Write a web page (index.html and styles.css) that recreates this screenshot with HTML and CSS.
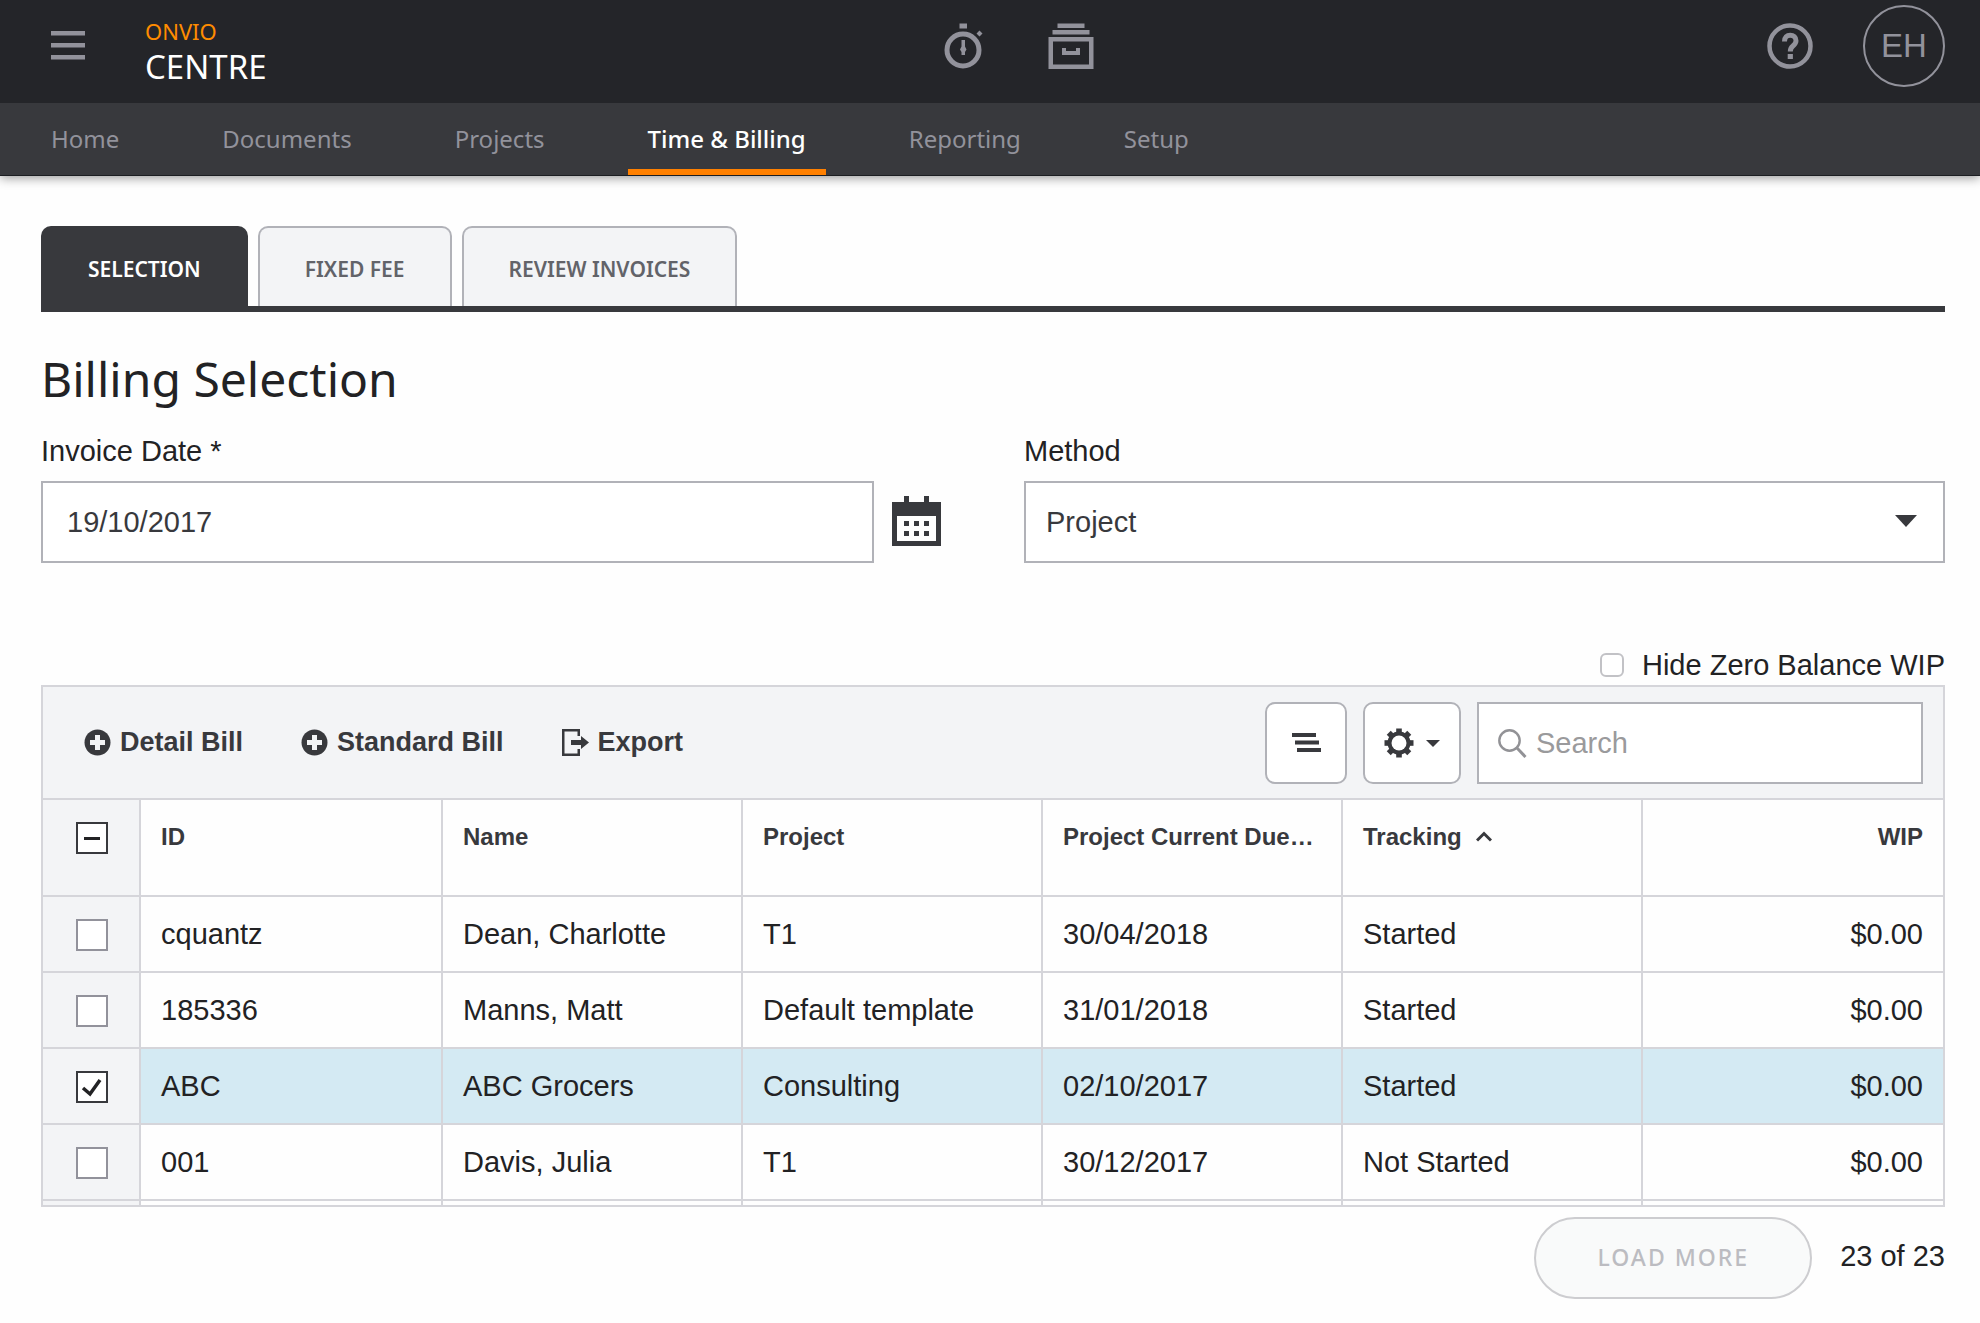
FILE: index.html
```html
<!DOCTYPE html>
<html lang="en-GB">
<head>
<meta charset="utf-8">
<meta name="viewport" content="width=device-width, initial-scale=1">
<title>Billing Selection - Onvio Centre</title>
<link rel="stylesheet" href="styles.css">
</head>
<body>
<header class="site-header">
  <div class="topbar">
    <div class="topbar-left">
      <button class="icon-btn" type="button" aria-label="Menu">
        <svg width="34" height="30" viewBox="0 0 34 30" fill="currentColor"><path d="M0 0h34v4.500H0zM0 12h34v4.500H0zM0 24h34v4.500H0z"/></svg>
      </button>
      <a class="brand" href="#"><span class="brand-top">ONVIO</span><span class="brand-name">CENTRE</span></a>
    </div>
    <div class="topbar-center">
      <button class="icon-btn" type="button" aria-label="Timer">
        <svg width="40" height="46" viewBox="0 0 40 46" fill="none">
          <circle cx="19" cy="27" r="16" stroke="currentColor" stroke-width="5"/>
          <path fill="currentColor" d="M15.500 0.500h7.500v5h-7.500zM35.500 7.500l3 3-3 3-3-3zM17.500 17h3.500v6.500l1.500 3-1.500 2.500v3h-3.500v-3l-1.500-2.500 1.500-3z"/>
        </svg>
      </button>
      <button class="icon-btn" type="button" aria-label="Files">
        <svg width="46" height="46" viewBox="0 0 46 46" fill="none">
          <path fill="currentColor" d="M9.500 0.500h27v4.500h-27zM4.500 7h37v4.500h-37zM14 25h4v3h10v-3h4v7H14z"/>
          <path stroke="currentColor" stroke-width="4.500" d="M2.750 16.250h40.500v27.500H2.750z"/>
        </svg>
      </button>
    </div>
    <div class="topbar-right">
      <button class="icon-btn" type="button" aria-label="Help">
        <svg width="46" height="46" viewBox="0 0 46 46" fill="none" stroke="currentColor">
          <circle cx="23" cy="23" r="20.500" stroke-width="4.500"/>
          <path stroke-width="5" d="M17.500 18.500c0-4.200 2.400-6.200 5.700-6.200s5.800 2 5.800 5.400c0 2.700-1.500 3.900-3 5.200-1.800 1.500-2.700 2.500-2.700 5.600"/>
          <path fill="currentColor" stroke="none" d="M20.700 31h5.200v5h-5.200z"/>
        </svg>
      </button>
      <button class="avatar" type="button">EH</button>
    </div>
  </div>
  <nav class="main-nav">
    <a href="#">Home</a>
    <a href="#">Documents</a>
    <a href="#">Projects</a>
    <a class="active" href="#" aria-current="page">Time &amp; Billing</a>
    <a href="#">Reporting</a>
    <a href="#">Setup</a>
  </nav>
</header>

<main class="content">
  <div class="tabs">
    <button class="tab tab-active" type="button">SELECTION</button>
    <button class="tab" type="button">FIXED FEE</button>
    <button class="tab" type="button">REVIEW INVOICES</button>
  </div>

  <h1>Billing Selection</h1>

  <div class="form-grid">
    <div class="field">
      <label for="invoice-date">Invoice Date *</label>
      <div class="date-row">
        <input class="control date-input" id="invoice-date" type="text" value="19/10/2017">
        <button class="icon-btn calendar-btn" type="button" aria-label="Choose a date">
          <svg width="50" height="50" viewBox="0 0 50 50" fill="currentColor">
            <path fill-rule="evenodd" d="M0 6h12V0h5v6h15V0h5v6h12v44H0zM5 20v25h39V20z"/>
            <path d="M12 25h5v5h-5zM22 25h5v5h-5zM32 25h5v5h-5zM12 35h5v5h-5zM22 35h5v5h-5zM32 35h5v5h-5z"/>
          </svg>
        </button>
      </div>
    </div>
    <div class="field">
      <label for="method">Method</label>
      <div class="select-wrap">
        <select class="control" id="method"><option>Project</option></select>
        <svg class="select-arrow" width="22" height="12" viewBox="0 0 22 12" fill="currentColor"><path d="M0 0h22L11 12z"/></svg>
      </div>
    </div>
  </div>

  <div class="zero-row">
    <label class="zero-label"><input class="zero-check" type="checkbox">Hide Zero Balance WIP</label>
  </div>

  <section class="grid-panel">
    <div class="toolbar">
      <div class="toolbar-actions">
        <button class="action" type="button">
          <svg width="27" height="27" viewBox="0 0 27 27"><circle cx="13.500" cy="13.500" r="13" fill="currentColor"/><path fill="#f3f4f6" d="M11 6h5v5h5v5h-5v5h-5v-5H6v-5h5z"/></svg>Detail Bill</button>
        <button class="action" type="button">
          <svg width="27" height="27" viewBox="0 0 27 27"><circle cx="13.500" cy="13.500" r="13" fill="currentColor"/><path fill="#f3f4f6" d="M11 6h5v5h5v5h-5v5h-5v-5H6v-5h5z"/></svg>Standard Bill</button>
        <button class="action" type="button">
          <svg width="27" height="27" viewBox="0 0 27 27" fill="currentColor"><path d="M0 0h18v7h-2.500V2.500h-13v22h13V20H18v7H0z"/><path d="M9 11h10V7l8 6.500-8 6.500v-4H9z"/></svg>Export</button>
      </div>
      <div class="toolbar-tools">
        <button class="tool-btn list-btn" type="button" aria-label="Group rows">
          <svg width="30" height="20" viewBox="0 0 30 20" fill="currentColor"><path d="M1 0h24v4H1zM4 7.500h24v4H4zM6 15h24v4H6z"/></svg>
        </button>
        <button class="tool-btn gear-btn" type="button" aria-label="Settings">
          <svg width="30" height="30" viewBox="-15 -15 30 30">
            <g fill="currentColor">
              <path id="tooth" d="M-2.800 -14.500h5.600v29h-5.600z"/>
              <use href="#tooth" transform="rotate(45)"/>
              <use href="#tooth" transform="rotate(90)"/>
              <use href="#tooth" transform="rotate(135)"/>
              <circle r="11.500"/>
            </g>
            <circle r="7.500" fill="#fff"/>
          </svg>
          <svg width="14" height="7" viewBox="0 0 14 7" fill="currentColor"><path d="M0 0h14L7 7z"/></svg>
        </button>
        <label class="search">
          <svg width="29" height="29" viewBox="0 0 29 29" fill="none" stroke="currentColor"><circle cx="11.500" cy="11.500" r="10.200" stroke-width="2.400"/><path stroke-width="3" d="M19 19l8.500 9"/></svg>
          <input type="search" placeholder="Search" aria-label="Search">
        </label>
      </div>
    </div>
    <table class="bill-table">
      <thead>
        <tr>
          <th class="check-cell"><input class="box box-mixed" type="checkbox" aria-label="Select all rows"></th>
          <th class="id-cell">ID</th>
          <th>Name</th>
          <th>Project</th>
          <th>Project Current Due…</th>
          <th>Tracking<svg class="sort" width="16" height="11" viewBox="0 0 16 11" fill="none" stroke="currentColor" stroke-width="3"><path d="M1 9.500l7-7 7 7"/></svg></th>
          <th class="num">WIP</th>
        </tr>
      </thead>
      <tbody>
        <tr>
          <td class="check-cell"><input class="box" type="checkbox" aria-label="Select cquantz"></td>
          <td>cquantz</td><td>Dean, Charlotte</td><td>T1</td><td>30/04/2018</td><td>Started</td><td class="num">$0.00</td>
        </tr>
        <tr>
          <td class="check-cell"><input class="box" type="checkbox" aria-label="Select 185336"></td>
          <td>185336</td><td>Manns, Matt</td><td>Default template</td><td>31/01/2018</td><td>Started</td><td class="num">$0.00</td>
        </tr>
        <tr class="selected">
          <td class="check-cell"><input class="box" type="checkbox" checked aria-label="Select ABC"></td>
          <td>ABC</td><td>ABC Grocers</td><td>Consulting</td><td>02/10/2017</td><td>Started</td><td class="num">$0.00</td>
        </tr>
        <tr>
          <td class="check-cell"><input class="box" type="checkbox" aria-label="Select 001"></td>
          <td>001</td><td>Davis, Julia</td><td>T1</td><td>30/12/2017</td><td>Not Started</td><td class="num">$0.00</td>
        </tr>
        <tr class="filler">
          <td class="check-cell"></td><td></td><td></td><td></td><td></td><td></td><td></td>
        </tr>
      </tbody>
    </table>
  </section>

  <footer class="pager">
    <button class="load-more" type="button" disabled>LOAD MORE</button>
    <span class="count">23 of 23</span>
  </footer>
</main>
</body>
</html>
```
FILE: styles.css
```css
* {
  box-sizing: border-box;
}

body {
  margin: 0;
  background: #fefefe;
  color: #222224;
  font: 29px/32px "Liberation Sans", Arial, sans-serif;
}

button,
input,
select {
  font: inherit;
  color: inherit;
}

button {
  padding: 0;
  border: 0;
  background: none;
  cursor: pointer;
}

svg {
  display: block;
  flex: none;
}

/* Header */
.site-header {
  border-bottom: 1px solid #1c1e22;
  box-shadow: 0 2px 10px rgba(0, 0, 0, 0.4);
  font-family: "Noto Sans", "Open Sans", sans-serif;
}

.topbar {
  display: grid;
  grid-template-columns: 1fr auto 1fr;
  height: 103px;
  padding: 0 35px 0 51px;
  background: #242529;
}

.topbar-left,
.topbar-center,
.topbar-right {
  display: flex;
  align-items: center;
  height: 92px;
}

.icon-btn {
  color: #92929b;
}

.topbar-left {
  gap: 60px;
}

.brand {
  display: flex;
  flex-direction: column;
  padding-top: 10px;
  text-decoration: none;
}

.brand-top {
  color: #ff8c00;
  font-size: 22px;
  line-height: 32px;
}

.brand-name {
  color: #fff;
  font-size: 33px;
  line-height: 40px;
}

.topbar-center {
  gap: 64px;
  margin-left: 42px;
}

.topbar-right {
  justify-content: flex-end;
  gap: 50px;
}

.avatar {
  width: 82px;
  height: 82px;
  border: 2px solid #92929b;
  border-radius: 50%;
  color: #92929b;
  font-family: "Liberation Sans", Arial, sans-serif;
  font-size: 33px;
}

.main-nav {
  display: flex;
  gap: 63px;
  padding-left: 31px;
  background: #38393d;
  font-size: 24px;
}

.main-nav a {
  padding: 20px 20px 14px;
  border-bottom: 6px solid transparent;
  color: #92929b;
  text-decoration: none;
}

.main-nav .active {
  border-color: #ff8000;
  color: #fff;
  font-weight: 500;
}

/* Page */
.content {
  padding: 50px 35px 24px 41px;
}

.tabs {
  display: flex;
  gap: 10px;
  border-bottom: 6px solid #38393d;
}

.tab {
  height: 80px;
  padding: 4px 45px 0;
  border: 2px solid #b1b2b8;
  border-bottom: 0;
  border-radius: 10px 10px 0 0;
  background: #f3f4f6;
  color: #626369;
  font: 600 21px/32px "Noto Sans", "Open Sans", sans-serif;
}

.tab-active {
  border-color: #38393d;
  background: #38393d;
  color: #fff;
}

h1 {
  margin: 35px 0 24px;
  font: 48px/64px "Noto Sans", "Open Sans", sans-serif;
}

.form-grid {
  display: grid;
  grid-template-columns: 1fr 1fr;
  gap: 62px;
}

.field {
  display: flex;
  flex-direction: column;
  gap: 14px;
}

.date-row {
  display: flex;
  align-items: center;
  gap: 18px;
  padding-right: 20px;
}

.control {
  width: 100%;
  height: 82px;
  padding: 0 20px;
  border: 2px solid #b1b2b8;
  border-radius: 0;
  background: #fff;
  color: #38393d;
  appearance: none;
}

.date-input {
  flex: 1;
  min-width: 0;
  padding: 0 24px;
}

.calendar-btn {
  margin-bottom: 2px;
  color: #38393d;
}

.select-wrap {
  position: relative;
  color: #38393d;
}

.select-arrow {
  position: absolute;
  top: 34px;
  right: 28px;
  pointer-events: none;
}

.zero-row {
  display: flex;
  justify-content: flex-end;
  padding: 86px 0 4px;
}

.zero-label {
  display: flex;
  align-items: center;
  gap: 18px;
}

.zero-check {
  width: 24px;
  height: 24px;
  margin: 0;
  border: 2px solid #c2c2c6;
  border-radius: 6px;
  background: #fff;
  appearance: none;
}

/* Grid */
.grid-panel {
  border: 2px solid #d5d5da;
}

.toolbar {
  display: flex;
  justify-content: space-between;
  height: 113px;
  padding: 15px 20px 0 41px;
  border-bottom: 2px solid #d5d5da;
  background: #f3f4f6;
  color: #38393d;
}

.toolbar-actions {
  display: flex;
  gap: 58px;
  height: 80px;
}

.action {
  display: flex;
  align-items: center;
  gap: 9px;
  font-size: 27px;
  font-weight: bold;
}

.toolbar-tools {
  display: flex;
  gap: 16px;
  height: 82px;
}

.tool-btn {
  display: flex;
  align-items: center;
  justify-content: center;
  gap: 12px;
  border: 2px solid #b1b2b8;
  border-radius: 10px;
  background: #fff;
}

.list-btn {
  width: 82px;
}

.gear-btn {
  width: 98px;
}

.search {
  display: flex;
  align-items: center;
  gap: 9px;
  width: 446px;
  padding: 0 19px;
  border: 2px solid #b1b2b8;
  background: #fff;
  color: #929296;
}

.search input {
  flex: 1;
  min-width: 0;
  padding: 0;
  border: 0;
  background: none;
  color: #38393d;
  appearance: none;
}

.search input::placeholder {
  color: #9a9a9c;
  opacity: 1;
}

.bill-table {
  width: 100%;
  border-spacing: 0;
  table-layout: fixed;
}

.bill-table th,
.bill-table td {
  height: 76px;
  padding: 0 20px;
  border-right: 2px solid #d5d5da;
  border-bottom: 2px solid #d5d5da;
  text-align: left;
}

.bill-table th {
  height: 97px;
  padding-top: 21px;
  color: #38393d;
  font-size: 24px;
  vertical-align: top;
  white-space: nowrap;
}

.bill-table th:last-child,
.bill-table td:last-child {
  border-right: 0;
}

.bill-table .num {
  text-align: right;
}

.bill-table .check-cell {
  width: 98px;
  padding: 22px 0 0 33px;
  background: #f3f4f6;
  vertical-align: top;
}

.bill-table .id-cell {
  width: 302px;
}

.selected td {
  background: #d4eaf3;
}

.bill-table .filler td {
  height: 4px;
  padding: 0;
  border-bottom: 0;
}

.sort {
  display: inline-block;
  margin: 0 0 3px 14px;
}

.box {
  display: block;
  width: 32px;
  height: 32px;
  margin: 0;
  border: 2px solid #92929b;
  background: #fff center / 28px no-repeat;
  appearance: none;
}

.box:checked,
.box-mixed {
  border-color: #38393d;
}

.box:checked {
  background-image: url("data:image/svg+xml,%3Csvg xmlns='http://www.w3.org/2000/svg' viewBox='0 0 28 28'%3E%3Cpath d='M5 15l7 6L22 7' fill='none' stroke='%23222224' stroke-width='3.500'/%3E%3C/svg%3E");
}

.box-mixed {
  background-image: linear-gradient(#222224, #222224);
  background-size: 16px 3px;
}

/* Pager */
.pager {
  display: flex;
  align-items: center;
  justify-content: flex-end;
  gap: 28px;
  padding-top: 10px;
}

.load-more {
  height: 82px;
  padding: 0 61px 3px;
  border: 2px solid #cdcdd0;
  border-radius: 41px;
  background: #f9fafa;
  color: #bcbcc1;
  font: 500 23px/32px "Noto Sans", "Open Sans", sans-serif;
  letter-spacing: 2px;
}

.count {
  padding-bottom: 4px;
}
```
